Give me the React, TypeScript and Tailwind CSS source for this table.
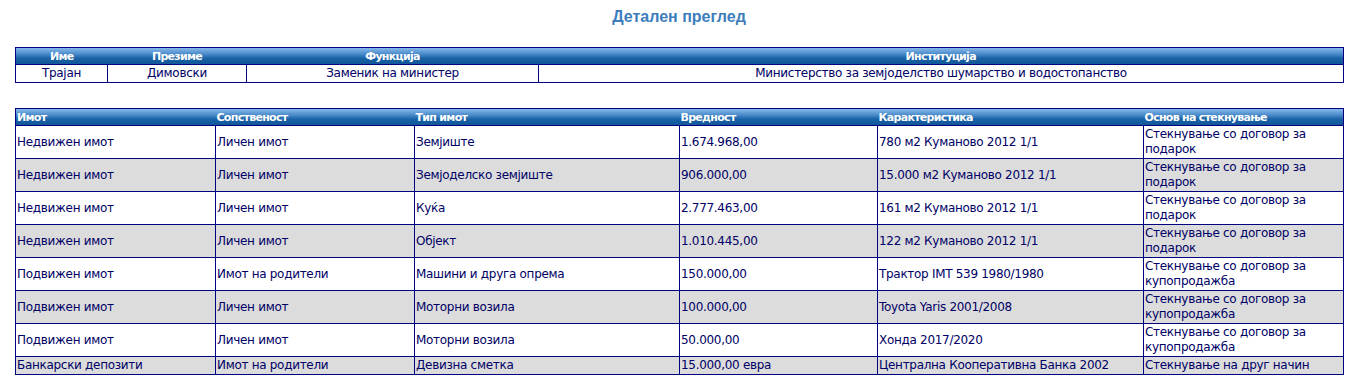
import React from 'react';

type AssetRow = {
  imot: string;
  sopstvenost: string;
  tip: string;
  vrednost: string;
  karakteristika: string;
  osnov: string;
};

const assets: AssetRow[] = [
  { imot: 'Недвижен имот', sopstvenost: 'Личен имот', tip: 'Земјиште', vrednost: '1.674.968,00', karakteristika: '780 м2 Куманово 2012 1/1', osnov: 'Стекнување со договор за подарок' },
  { imot: 'Недвижен имот', sopstvenost: 'Личен имот', tip: 'Земјоделско земјиште', vrednost: '906.000,00', karakteristika: '15.000 м2 Куманово 2012 1/1', osnov: 'Стекнување со договор за подарок' },
  { imot: 'Недвижен имот', sopstvenost: 'Личен имот', tip: 'Куќа', vrednost: '2.777.463,00', karakteristika: '161 м2 Куманово 2012 1/1', osnov: 'Стекнување со договор за подарок' },
  { imot: 'Недвижен имот', sopstvenost: 'Личен имот', tip: 'Објект', vrednost: '1.010.445,00', karakteristika: '122 м2 Куманово 2012 1/1', osnov: 'Стекнување со договор за подарок' },
  { imot: 'Подвижен имот', sopstvenost: 'Имот на родители', tip: 'Машини и друга опрема', vrednost: '150.000,00', karakteristika: 'Трактор IMT 539 1980/1980', osnov: 'Стекнување со договор за купопродажба' },
  { imot: 'Подвижен имот', sopstvenost: 'Личен имот', tip: 'Моторни возила', vrednost: '100.000,00', karakteristika: 'Toyota Yaris 2001/2008', osnov: 'Стекнување со договор за купопродажба' },
  { imot: 'Подвижен имот', sopstvenost: 'Личен имот', tip: 'Моторни возила', vrednost: '50.000,00', karakteristika: 'Хонда 2017/2020', osnov: 'Стекнување со договор за купопродажба' },
  { imot: 'Банкарски депозити', sopstvenost: 'Имот на родители', tip: 'Девизна сметка', vrednost: '15.000,00 евра', karakteristika: 'Централна Кооперативна Банка 2002', osnov: 'Стекнување на друг начин' },
];

const headerBg =
  'bg-[linear-gradient(to_bottom,#86b9ea_0%,#4a8bcb_35%,#1a62a6_60%,#0f5597_100%)]';

const td = 'border border-[#000080] px-[1px] py-0 align-middle';

const App: React.FC = () => {
  return (
    <div className="min-h-screen bg-white font-['DejaVu_Sans',Verdana,sans-serif] text-[12px] leading-[15px] tracking-[-0.3px] text-[#000066]">
      {/* Title */}
      <h1 className="pl-[9px] pt-[8px] h-[47px] text-center font-['Liberation_Sans',Arial,sans-serif] text-[16px] font-bold leading-[18px] tracking-normal text-[#3d7dbd]">
        Детален преглед
      </h1>

      {/* Official */}
      <table className="ml-[15px] w-[1329px] table-fixed border-collapse">
        <colgroup>
          <col className="w-[92px]" />
          <col className="w-[139px]" />
          <col className="w-[292px]" />
          <col />
        </colgroup>
        <thead>
          <tr className={`${headerBg} h-[17px] text-[11px] font-bold tracking-[-0.7px] text-white`}>
            <th className="border border-[#000080] border-r-0 p-0 text-center font-bold">Име</th>
            <th className="border-y border-[#000080] p-0 text-center font-bold">Презиме</th>
            <th className="border-y border-[#000080] p-0 text-center font-bold">Функција</th>
            <th className="border border-[#000080] border-l-0 p-0 text-center font-bold">Институција</th>
          </tr>
        </thead>
        <tbody>
          <tr className="h-[18px]">
            <td className={`${td} text-center`}>Трајан</td>
            <td className={`${td} text-center`}>Димовски</td>
            <td className={`${td} text-center`}>Заменик на министер</td>
            <td className={`${td} text-center`}>Министерство за земјоделство шумарство и водостопанство</td>
          </tr>
        </tbody>
      </table>

      {/* Assets */}
      <table className="ml-[15px] mt-[25px] w-[1329px] table-fixed border-collapse">
        <colgroup>
          <col className="w-[200px]" />
          <col className="w-[199px]" />
          <col className="w-[265px]" />
          <col className="w-[198px]" />
          <col className="w-[266px]" />
          <col />
        </colgroup>
        <thead>
          <tr className={`${headerBg} h-[17px] text-[11px] font-bold tracking-[-0.7px] text-white`}>
            {['Имот', 'Сопственост', 'Тип имот', 'Вредност', 'Карактеристика', 'Основ на стекнување'].map(
              (h, i) => (
                <th
                  key={h}
                  className={`border-y border-[#000080] px-[1px] py-0 text-left font-bold ${
                    i === 0 ? 'border-l' : ''
                  } ${i === 5 ? 'border-r' : ''}`}
                >
                  {h}
                </th>
              ),
            )}
          </tr>
        </thead>
        <tbody>
          {assets.map((a, i) => (
            <tr key={i} className={i % 2 === 1 ? 'bg-[#dcdcdc]' : 'bg-white'}>
              <td className={`${td} ${i === 7 ? 'h-[18px]' : 'h-[33px]'}`}>{a.imot}</td>
              <td className={td}>{a.sopstvenost}</td>
              <td className={td}>{a.tip}</td>
              <td className={td}>{a.vrednost}</td>
              <td className={td}>{a.karakteristika}</td>
              <td className={td}>{a.osnov}</td>
            </tr>
          ))}
        </tbody>
      </table>
    </div>
  );
};

export default App;
